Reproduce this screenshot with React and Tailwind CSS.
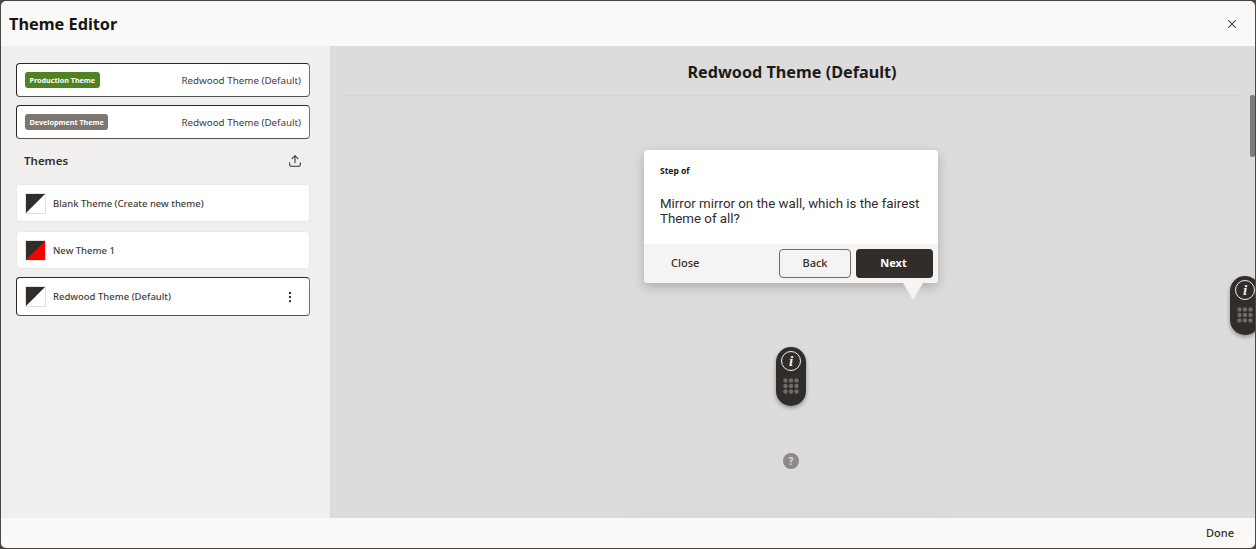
import {X, Upload, EllipsisVertical} from "lucide-react";

const font = "font-['Noto_Sans','Liberation_Sans',sans-serif]";

function AssignedTheme({label, badgeClass}) {
    return (
        <div className="h-[34px] flex items-center justify-between pl-[8px] pr-[8px]
                        bg-white rounded-[4px] border border-[#2a2725] border-r-[#77736f] border-b-[#55514e]">
            <span className={`h-[16px] flex items-center px-[4.5px] rounded-[3px] text-[7.2px] font-bold text-white ${badgeClass}`}>{label}</span>
            <span className="pt-[2px] text-[9.8px] text-[#3f3c3a]">Redwood Theme (Default)</span>
        </div>
    );
}

function Swatch({color}) {
    return (
        <svg width="21" height="21" viewBox="0 0 21 21" className="shrink-0 mr-[7px]">
            <rect x="0.5" y="0.5" width="20" height="20" fill="white" stroke="#e4e0dd"/>
            <polygon points="1,1 20,1 20,20 1,20" fill={color}/>
            <polygon points="1,1 20,1 1,20" fill="#312d2a"/>
        </svg>
    );
}

function ThemeRow({name, color = "#ffffff", selected = false}) {
    const rowClass = selected
        ? "h-[39px] -mt-[1px] border border-[#2a2725] border-r-[#77736f] border-b-[#55514e]"
        : "h-[38px] border border-[#ebe8e5]";
    return (
        <div className={`flex items-center pl-[8px] pr-[12px] bg-white rounded-[4px] ${rowClass}`}>
            <Swatch color={color}/>
            <span className="flex-1 pt-[2px] text-[9.5px] text-[#3f3c3a] font-medium">{name}</span>
            {selected && <EllipsisVertical size={14} strokeWidth={2} className="text-[#312d2a]"/>}
        </div>
    );
}

function Sidebar() {
    return (
        <aside className="w-[329px] shrink-0 bg-[#f1efed] pl-[15px] pr-[20px] pt-[17px] flex flex-col">
            <div className="flex flex-col gap-[8px]">
                <AssignedTheme label="Production Theme" badgeClass="bg-[#508223]"/>
                <AssignedTheme label="Development Theme" badgeClass="bg-[#7e7671]"/>
            </div>
            <div className="h-[45px] flex items-center justify-between pl-[8px] pr-[8px] pb-[1px]">
                <span className="text-[11.5px] font-semibold text-[#312d2a]">Themes</span>
                <Upload size={14} strokeWidth={1.8} className="text-[#312d2a]"/>
            </div>
            <div className="flex flex-col gap-[9px]">
                <ThemeRow name="Blank Theme (Create new theme)"/>
                <ThemeRow name="New Theme 1" color="#f80000"/>
                <ThemeRow name="Redwood Theme (Default)" selected/>
            </div>
        </aside>
    );
}

function TourPopup() {
    return (
        <div className="absolute left-[314px] top-[104px] w-[294px] h-[133px] rounded-[4px] bg-white
                        shadow-[0_4px_12px_rgba(0,0,0,0.22)] flex flex-col">
            <div className="flex-1 pl-[16px] pr-[12px]">
                <div className="pt-[14px] text-[8.5px] font-bold leading-[14px] text-[#161513]">Step of</div>
                <p className="mt-[18px] font-['Roboto',sans-serif] text-[13.3px] leading-[15px] text-[#312d2a]">
                    Mirror mirror on the wall, which is the fairest Theme of all?
                </p>
            </div>
            <div className="h-[39px] bg-[#f5f4f2] rounded-b-[4px] flex items-center pl-[27px] pr-[5px]">
                <span className="flex-1 text-[11px] font-medium text-[#312d2a]">Close</span>
                <button className="w-[72px] h-[29px] rounded-[4px] border border-[#6f6b68] text-[11px] font-medium text-[#312d2a]">Back</button>
                <button className="ml-[5px] w-[77px] h-[29px] pr-[2px] rounded-[4px] bg-[#312d2a] text-[11px] font-bold text-white">Next</button>
            </div>
            <div className="absolute left-[259px] top-[133px] w-0 h-0 border-l-[10px] border-r-[10px] border-t-[17px]
                            border-l-transparent border-r-transparent border-t-[#f5f4f2]"/>
        </div>
    );
}

function HotspotPill({className}) {
    return (
        <div className={`absolute w-[30px] h-[59px] rounded-full bg-[#312d2a] shadow-[0_2px_4px_rgba(0,0,0,0.35)]
                         flex flex-col items-center pt-[4px] ${className}`}>
            <span className="w-[20px] h-[20px] rounded-full border-[1.5px] border-[#f1efed] flex items-center justify-center
                             font-['Liberation_Serif',serif] italic font-bold text-[15px] leading-none text-[#f1efed]">i</span>
            <svg width="16" height="16" viewBox="0 0 16 16" className="mt-[7px]" fill="#6f6b68">
                {[2.5, 8, 13.5].flatMap(cy => [2.5, 8, 13.5].map(cx => (
                    <circle key={`${cx}-${cy}`} cx={cx} cy={cy} r="2.2"/>
                )))}
            </svg>
        </div>
    );
}

function Preview() {
    return (
        <main className="relative flex-1 bg-[#dcdcdc] overflow-hidden">
            <div className="ml-[12px] mr-[12px] h-[50px] border-b border-[#d6d4d2] flex items-center justify-center">
                <h2 className="pt-[3px] text-[16.2px] font-bold text-[#1d1b1a] pr-[1px]">Redwood Theme (Default)</h2>
            </div>
            <TourPopup/>
            <HotspotPill className="left-[446px] top-[301px]"/>
            <HotspotPill className="left-[900px] top-[230px]"/>
            <span className="absolute left-[453px] top-[407px] w-[16px] h-[16px] rounded-full bg-[#8c8986]
                             flex items-center justify-center text-[10px] font-bold text-[#dedddc]">?</span>
            <div className="absolute left-[300px] bottom-0 w-[320px] h-[8px] rounded-t-[100%] bg-[#dadada]"/>
            <div className="absolute right-[0px] top-[49px] w-[5px] h-[62px] rounded-[2px] bg-[#7b7b7b]"/>
        </main>
    );
}

export default function App() {
    return (
        <div className={`w-[1256px] h-[549px] overflow-hidden bg-[#4a4644] ${font}`}>
            <div className="h-full flex flex-col p-[1px]">
                <div className="flex-1 flex flex-col rounded-[5px] overflow-hidden">
                    <header className="h-[45px] shrink-0 bg-[#fbf9f8] flex items-center justify-between pl-[8px] pr-[16px]">
                        <h1 className="pt-[1px] text-[16.3px] font-bold text-[#161513]">Theme Editor</h1>
                        <X size={14} strokeWidth={1.8} className="text-[#312d2a]"/>
                    </header>
                    <div className="flex-1 flex min-h-0">
                        <Sidebar/>
                        <Preview/>
                    </div>
                    <footer className="h-[30px] shrink-0 bg-[#fbf9f8] flex items-center justify-end pr-[21px]">
                        <span className="text-[11px] font-medium text-[#312d2a]">Done</span>
                    </footer>
                </div>
            </div>
        </div>
    );
}
